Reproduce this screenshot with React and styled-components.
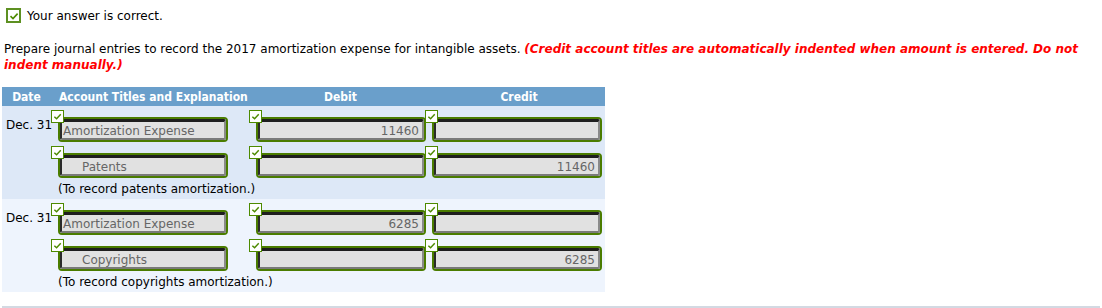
import styled, { createGlobalStyle } from "styled-components";

const GlobalStyle = createGlobalStyle`
  body {
    margin: 0;
    background: #fff;
    font-family: "DejaVu Sans", Verdana, sans-serif;
    font-size: 12px;
    color: #000;
  }
`;

const cols = "49px 198px 176px 180px";

const Page = styled.div`
  padding: 8px 2px 0;
`;

const Result = styled.div`
  display: flex;
  align-items: center;
  gap: 6px;
  padding-left: 4px;
  height: 15px;
`;

const BigCheck = styled.span`
  width: 15px;
  height: 15px;
  box-sizing: border-box;
  border: 2px solid #5d9021;
  background: #fff;
  display: inline-flex;
  align-items: center;
  justify-content: center;
`;

const Question = styled.p`
  margin: 18px 0 14px 2px;
  line-height: 16px;
  white-space: nowrap;
`;

const Note = styled.em`
  color: #f00;
  font-weight: bold;
`;

const Journal = styled.div`
  width: 603px;
`;

const HeaderRow = styled.div`
  display: grid;
  grid-template-columns: ${cols};
  height: 19px;
  align-items: center;
  background: #6a9fcb;
  color: #fff;
  font-weight: bold;
  font-size: 12px;
  font-stretch: condensed;
`;

const HeadCell = styled.div`
  text-align: ${(p) => p.$align || "center"};
  padding-left: ${(p) => p.$pad || 0}px;
`;

const Entry = styled.div`
  background: ${(p) => (p.$alt ? "#eef4fd" : "#dde8f7")};
  padding-top: 4px;
  display: flex;
  flex-direction: column;
  gap: 4px;
`;

const Line = styled.div`
  display: grid;
  grid-template-columns: ${cols};
  height: 32px;
`;

const DateCell = styled.div`
  padding: 8px 0 0 4px;
  line-height: 14px;
  white-space: nowrap;
`;

const Field = styled.div`
  position: relative;
  padding: 7px 0 0 7px;
`;

const Tick = styled.span`
  position: absolute;
  left: 0;
  top: 0;
  width: 13px;
  height: 13px;
  box-sizing: border-box;
  border: 1px solid #4d8a00;
  background: #fff;
  display: flex;
  align-items: center;
  justify-content: center;
`;

const Box = styled.div`
  width: 170px;
  height: 25px;
  box-sizing: border-box;
  border: 2px solid #4a7c00;
  border-radius: 4px;
  overflow: hidden;
`;

const Inner = styled.div`
  height: 100%;
  box-sizing: border-box;
  background: #e1e1e1;
  border-top: 3px solid #1e1e1e;
  border-left: 2px solid #2a2a2a;
  border-bottom: 2px solid #7a7a7a;
  border-right: 2px solid #8a8a8a;
  color: #666;
  font-size: 12px;
  padding: 1px 3px 0 ${(p) => (p.$indent ? 20 : 1)}px;
  display: flex;
  align-items: center;
  justify-content: ${(p) => (p.$right ? "flex-end" : "flex-start")};
`;

const Explanation = styled.div`
  padding: 0 0 2px 56px;
  line-height: 15px;
`;

const Divider = styled.div`
  margin-top: 14px;
  border-top: 2px solid #d3d9e2;
`;

function CheckMark({ size = 9 }) {
  return (
    <svg width={size} height={size} viewBox="0 0 10 10">
      <path d="M1.5 5.2 L4 7.6 L8.6 2.6" fill="none" stroke="#4d8a00" strokeWidth="1.6" />
    </svg>
  );
}

function InputField({ value, indent, right }) {
  return (
    <Field>
      <Tick>
        <CheckMark size={9} />
      </Tick>
      <Box>
        <Inner $indent={indent} $right={right}>
          {value}
        </Inner>
      </Box>
    </Field>
  );
}

const entries = [
  { date: "Dec. 31", debitAcc: "Amortization Expense", creditAcc: "Patents", amount: "11460", note: "(To record patents amortization.)" },
  { date: "Dec. 31", debitAcc: "Amortization Expense", creditAcc: "Copyrights", amount: "6285", note: "(To record copyrights amortization.)" },
];

export default function App() {
  return (
    <Page>
      <GlobalStyle />
      <Result>
        <BigCheck>
          <CheckMark size={10} />
        </BigCheck>
        Your answer is correct.
      </Result>
      <Question>
        Prepare journal entries to record the 2017 amortization expense for intangible assets.{" "}
        <Note>(Credit account titles are automatically indented when amount is entered. Do not</Note>
        <br />
        <Note>indent manually.)</Note>
      </Question>
      <Journal>
        <HeaderRow>
          <HeadCell>Date</HeadCell>
          <HeadCell $align="left" $pad={8}>Account Titles and Explanation</HeadCell>
          <HeadCell $pad={7}>Debit</HeadCell>
          <HeadCell $pad={8}>Credit</HeadCell>
        </HeaderRow>
        {entries.map((e, i) => (
          <Entry key={i} $alt={i % 2 === 1}>
            <Line>
              <DateCell>{e.date}</DateCell>
              <InputField value={e.debitAcc} />
              <InputField value={e.amount} right />
              <InputField />
            </Line>
            <Line>
              <DateCell />
              <InputField value={e.creditAcc} indent />
              <InputField />
              <InputField value={e.amount} right />
            </Line>
            <Explanation>{e.note}</Explanation>
          </Entry>
        ))}
      </Journal>
      <Divider />
    </Page>
  );
}
